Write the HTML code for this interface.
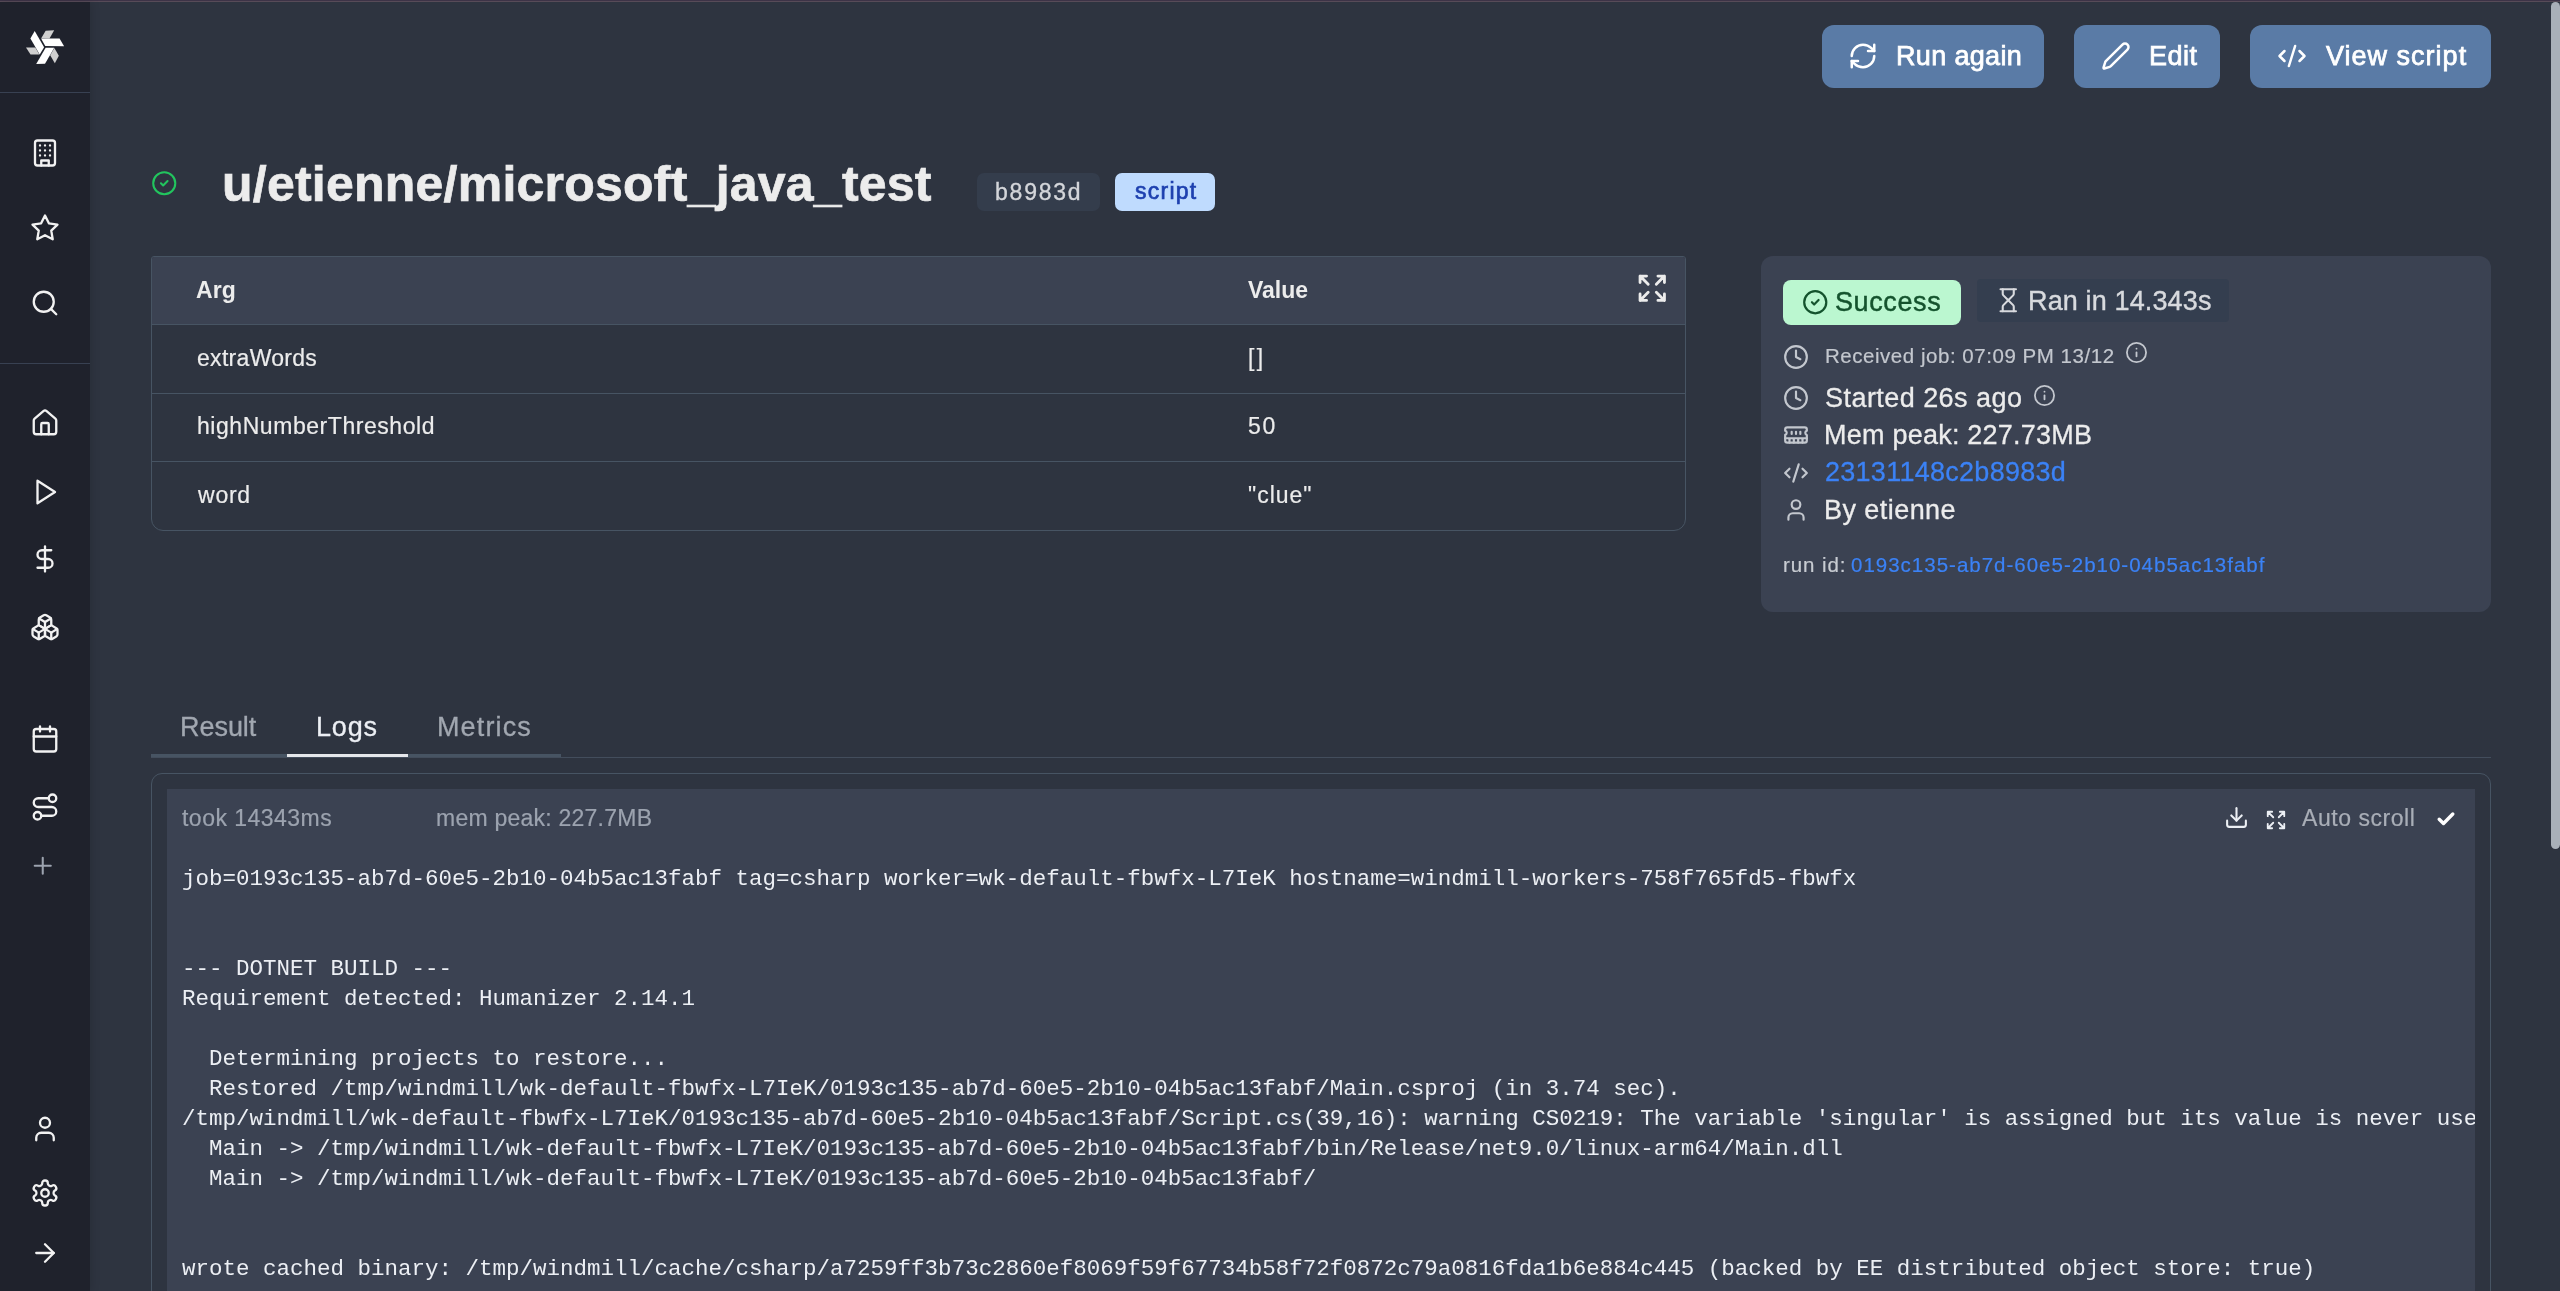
<!DOCTYPE html>
<html><head><meta charset="utf-8">
<style>
*{box-sizing:border-box;margin:0;padding:0}
html,body{width:2560px;height:1291px;overflow:hidden;background:#2e3440;font-family:"Liberation Sans",sans-serif;color:#eceff4}
.abs{position:absolute}
svg{overflow:visible}
.t{position:absolute;white-space:pre;line-height:1;will-change:transform}
#log{position:absolute;left:15px;top:75px;will-change:transform;font-family:"Liberation Mono",monospace;font-size:22.5px;line-height:30px;color:#eceff4;white-space:pre}
</style></head>
<body>
<div class="abs" style="left:0;top:0;width:2560px;height:1px;background:#3d3347"></div>
<div class="abs" style="left:0;top:1px;width:2560px;height:1px;background:#574b58"></div>
<div class="abs" style="left:0;top:2px;width:90px;height:1289px;background:#1f222c;box-shadow:2px 0 8px rgba(0,0,0,.12)"></div>
<div class="abs" style="left:0;top:92px;width:90px;height:1px;background:#384152"></div>
<div class="abs" style="left:0;top:363px;width:90px;height:1px;background:#384152"></div>
<svg class="abs" style="left:45px;top:47px;width:1px;height:1px" viewBox="0 0 1 1"><g><polygon fill="#cfcfcf" points="-19,0.4 -9.7,0.4 -5.6,7.6 -14.5,7.6"/><polygon fill="#ffffff" points="-10.3,-16.1 -0.9,0.2 -5.3,7.6 -14.6,-8.4"/></g><g transform="rotate(120)"><polygon fill="#cfcfcf" points="-19,0.4 -9.7,0.4 -5.6,7.6 -14.5,7.6"/><polygon fill="#ffffff" points="-10.3,-16.1 -0.9,0.2 -5.3,7.6 -14.6,-8.4"/></g><g transform="rotate(240)"><polygon fill="#cfcfcf" points="-19,0.4 -9.7,0.4 -5.6,7.6 -14.5,7.6"/><polygon fill="#ffffff" points="-10.3,-16.1 -0.9,0.2 -5.3,7.6 -14.6,-8.4"/></g></svg>
<svg class="abs" style="left:30.00px;top:137.50px;width:30px;height:30px" viewBox="0 0 24 24" fill="none" stroke="#f2f2f2" stroke-width="1.85" stroke-linecap="round" stroke-linejoin="round"><rect width="16" height="20" x="4" y="2" rx="2" ry="2"/><path d="M9 22v-4h6v4"/><path d="M8 6h.01"/><path d="M16 6h.01"/><path d="M12 6h.01"/><path d="M12 10h.01"/><path d="M12 14h.01"/><path d="M16 10h.01"/><path d="M16 14h.01"/><path d="M8 10h.01"/><path d="M8 14h.01"/></svg>
<svg class="abs" style="left:30.00px;top:212.50px;width:30px;height:30px" viewBox="0 0 24 24" fill="none" stroke="#f2f2f2" stroke-width="1.85" stroke-linecap="round" stroke-linejoin="round"><polygon points="12 2 15.09 8.26 22 9.27 17 14.14 18.18 21.02 12 17.77 5.82 21.02 7 14.14 2 9.27 8.91 8.26 12 2"/></svg>
<svg class="abs" style="left:30.00px;top:287.50px;width:30px;height:30px" viewBox="0 0 24 24" fill="none" stroke="#f2f2f2" stroke-width="1.85" stroke-linecap="round" stroke-linejoin="round"><circle cx="11" cy="11" r="8"/><path d="m21 21-4.3-4.3"/></svg>
<svg class="abs" style="left:30.00px;top:408.00px;width:30px;height:30px" viewBox="0 0 24 24" fill="none" stroke="#f2f2f2" stroke-width="1.85" stroke-linecap="round" stroke-linejoin="round"><path d="M15 21v-8a1 1 0 0 0-1-1h-4a1 1 0 0 0-1 1v8"/><path d="M3 10a2 2 0 0 1 .709-1.528l7-5.999a2 2 0 0 1 2.582 0l7 5.999A2 2 0 0 1 21 10v9a2 2 0 0 1-2 2H5a2 2 0 0 1-2-2z"/></svg>
<svg class="abs" style="left:30.00px;top:476.50px;width:30px;height:30px" viewBox="0 0 24 24" fill="none" stroke="#f2f2f2" stroke-width="1.85" stroke-linecap="round" stroke-linejoin="round"><polygon points="6 3 20 12 6 21 6 3"/></svg>
<svg class="abs" style="left:30.00px;top:544.00px;width:30px;height:30px" viewBox="0 0 24 24" fill="none" stroke="#f2f2f2" stroke-width="1.85" stroke-linecap="round" stroke-linejoin="round"><line x1="12" x2="12" y1="2" y2="22"/><path d="M17 5H9.5a3.5 3.5 0 0 0 0 7h5a3.5 3.5 0 0 1 0 7H6"/></svg>
<svg class="abs" style="left:30.00px;top:612.00px;width:30px;height:30px" viewBox="0 0 24 24" fill="none" stroke="#f2f2f2" stroke-width="1.85" stroke-linecap="round" stroke-linejoin="round"><path d="M2.97 12.92A2 2 0 0 0 2 14.630v3.24a2 2 0 0 0 .97 1.71l3 1.8a2 2 0 0 0 2.06 0L12 19v-5.5l-5-3-4.03 2.42Z"/><path d="m7 16.5-4.74-2.85"/><path d="m7 16.5 5-3"/><path d="M7 16.5v5.17"/><path d="M12 13.5V19l3.970 2.38a2 2 0 0 0 2.06 0l3-1.8a2 2 0 0 0 .97-1.71v-3.24a2 2 0 0 0-.97-1.71L17 10.5l-5 3Z"/><path d="m17 16.5-5-3"/><path d="m17 16.5 4.74-2.85"/><path d="M17 16.5v5.17"/><path d="M7.97 4.42A2 2 0 0 0 7 6.13v4.37l5 3 5-3V6.13a2 2 0 0 0-.97-1.71l-3-1.8a2 2 0 0 0-2.06 0l-3 1.8Z"/><path d="M12 8 7.26 5.15"/><path d="m12 8 4.74-2.85"/><path d="M12 13.5V8"/></svg>
<svg class="abs" style="left:30.00px;top:724.00px;width:30px;height:30px" viewBox="0 0 24 24" fill="none" stroke="#f2f2f2" stroke-width="1.85" stroke-linecap="round" stroke-linejoin="round"><path d="M8 2v4"/><path d="M16 2v4"/><rect width="18" height="18" x="3" y="4" rx="2"/><path d="M3 10h18"/></svg>
<svg class="abs" style="left:30.00px;top:792.00px;width:30px;height:30px" viewBox="0 0 24 24" fill="none" stroke="#f2f2f2" stroke-width="1.85" stroke-linecap="round" stroke-linejoin="round"><circle cx="6" cy="19" r="3"/><path d="M9 19h8.5a3.5 3.5 0 0 0 0-7h-11a3.5 3.5 0 0 1 0-7H15"/><circle cx="18" cy="5" r="3"/></svg>
<svg class="abs" style="left:30.00px;top:1114.00px;width:30px;height:30px" viewBox="0 0 24 24" fill="none" stroke="#f2f2f2" stroke-width="1.85" stroke-linecap="round" stroke-linejoin="round"><path d="M19 21v-2a4 4 0 0 0-4-4H9a4 4 0 0 0-4 4v2"/><circle cx="12" cy="7" r="4"/></svg>
<svg class="abs" style="left:30.00px;top:1178.00px;width:30px;height:30px" viewBox="0 0 24 24" fill="none" stroke="#f2f2f2" stroke-width="1.85" stroke-linecap="round" stroke-linejoin="round"><path d="M12.22 2h-.44a2 2 0 0 0-2 2v.18a2 2 0 0 1-1 1.73l-.43.25a2 2 0 0 1-2 0l-.15-.08a2 2 0 0 0-2.73.73l-.22.38a2 2 0 0 0 .73 2.73l.15.1a2 2 0 0 1 1 1.72v.51a2 2 0 0 1-1 1.74l-.15.09a2 2 0 0 0-.73 2.730l.22.38a2 2 0 0 0 2.73.73l.15-.08a2 2 0 0 1 2 0l.43.25a2 2 0 0 1 1 1.73V20a2 2 0 0 0 2 2h.44a2 2 0 0 0 2-2v-.18a2 2 0 0 1 1-1.73l.43-.25a2 2 0 0 1 2 0l.15.08a2 2 0 0 0 2.73-.73l.22-.39a2 2 0 0 0-.73-2.73l-.15-.08a2 2 0 0 1-1-1.74v-.5a2 2 0 0 1 1-1.74l.15-.09a2 2 0 0 0 .73-2.73l-.22-.38a2 2 0 0 0-2.73-.73l-.15.08a2 2 0 0 1-2 0l-.43-.25a2 2 0 0 1-1-1.73V4a2 2 0 0 0-2-2z"/><circle cx="12" cy="12" r="3"/></svg>
<svg class="abs" style="left:30.00px;top:1238.00px;width:30px;height:30px" viewBox="0 0 24 24" fill="none" stroke="#f2f2f2" stroke-width="1.85" stroke-linecap="round" stroke-linejoin="round"><path d="M5 12h14"/><path d="m12 5 7 7-7 7"/></svg>
<svg class="abs" style="left:29.25px;top:851.55px;width:27.5px;height:27.5px" viewBox="0 0 24 24" fill="none" stroke="#9ca3af" stroke-width="1.8" stroke-linecap="round" stroke-linejoin="round"><path d="M5 12h14"/><path d="M12 5v14"/></svg>
<div class="abs" style="left:2551px;top:2px;width:9px;height:847px;background:#a9b0b9;border-radius:5px"></div>

<div class="abs" style="left:1822px;top:25px;width:222px;height:63px;background:#5a7ba6;border-radius:12px"></div>
<div class="abs" style="left:2074px;top:25px;width:146px;height:63px;background:#5a7ba6;border-radius:12px"></div>
<div class="abs" style="left:2250px;top:25px;width:241px;height:63px;background:#5a7ba6;border-radius:12px"></div>
<svg class="abs" style="left:1848.00px;top:41.00px;width:30px;height:30px" viewBox="0 0 24 24" fill="none" stroke="#fff" stroke-width="2" stroke-linecap="round" stroke-linejoin="round"><path d="M3 12a9 9 0 0 1 9-9 9.75 9.75 0 0 1 6.74 2.74L21 8"/><path d="M21 3v5h-5"/><path d="M21 12a9 9 0 0 1-9 9 9.75 9.75 0 0 1-6.74-2.74L3 16"/><path d="M8 16H3v5"/></svg>
<svg class="abs" style="left:2101.00px;top:41.00px;width:30px;height:30px" viewBox="0 0 24 24" fill="none" stroke="#fff" stroke-width="2" stroke-linecap="round" stroke-linejoin="round"><path d="M21.174 6.812a1 1 0 0 0-3.986-3.987L3.842 16.174a2 2 0 0 0-.5.83l-1.321 4.352a.5.5 0 0 0 .623.622l4.353-1.32a2 2 0 0 0 .83-.497z"/></svg>
<svg class="abs" style="left:2277.00px;top:41.00px;width:30px;height:30px" viewBox="0 0 24 24" fill="none" stroke="#fff" stroke-width="2" stroke-linecap="round" stroke-linejoin="round"><path d="m18 16 4-4-4-4"/><path d="m6 8-4 4 4 4"/><path d="m14.5 4-5 16"/></svg>

<svg class="abs" style="left:150.75px;top:169.75px;width:26.5px;height:26.5px" viewBox="0 0 24 24" fill="none" stroke="#22c55e" stroke-width="1.85" stroke-linecap="round" stroke-linejoin="round"><circle cx="12" cy="12" r="10"/><path d="m9 12 2 2 4-4"/></svg>
<div class="abs" style="left:977px;top:173px;width:123px;height:38px;background:#343d4c;border-radius:7px"></div>
<div class="abs" style="left:1115px;top:173px;width:100px;height:38px;background:#bfdbfe;border-radius:7px"></div>

<div class="abs" style="left:151px;top:256px;width:1535px;height:275px;border:1px solid #475463;border-radius:3px 3px 12px 12px;overflow:hidden">
  <div class="abs" style="left:0;top:0;width:1533px;height:68px;background:#3b4252;border-bottom:1px solid #475463"></div>
  <div class="abs" style="left:0;top:136px;width:1533px;height:1px;background:#475463"></div>
  <div class="abs" style="left:0;top:204px;width:1533px;height:1px;background:#475463"></div>
</div>
<svg class="abs" style="left:1636.25px;top:272.25px;width:32.5px;height:32.5px" viewBox="0 0 24 24" fill="none" stroke="#ececec" stroke-width="2.1" stroke-linecap="round" stroke-linejoin="round"><path d="m21 21-6-6m6 6v-4.8m0 4.8h-4.8"/><path d="M3 16.2V21m0 0h4.8M3 21l6-6"/><path d="M21 7.8V3m0 0h-4.8M21 3l-6 6"/><path d="M3 7.8V3m0 0h4.8M3 3l6 6"/></svg>

<div class="abs" style="left:1761px;top:256px;width:730px;height:356px;background:#3b4252;border-radius:12px"></div>
<div class="abs" style="left:1783px;top:280px;width:178px;height:45px;background:#bbf7d0;border-radius:8px"></div>
<svg class="abs" style="left:1801.75px;top:288.75px;width:26.5px;height:26.5px" viewBox="0 0 24 24" fill="none" stroke="#14532d" stroke-width="2" stroke-linecap="round" stroke-linejoin="round"><circle cx="12" cy="12" r="10"/><path d="m9 12 2 2 4-4"/></svg>
<div class="abs" style="left:1977px;top:279px;width:252px;height:43px;background:#343e4f;border-radius:4px"></div>
<svg class="abs" style="left:1994.75px;top:286.75px;width:26.5px;height:26.5px" viewBox="0 0 24 24" fill="none" stroke="#d8dade" stroke-width="1.9" stroke-linecap="round" stroke-linejoin="round"><path d="M5 22h14"/><path d="M5 2h14"/><path d="M17 22v-4.172a2 2 0 0 0-.586-1.414L12 12l-4.414 4.414A2 2 0 0 0 7 17.828V22"/><path d="M7 2v4.172a2 2 0 0 0 .586 1.414L12 12l4.414-4.414A2 2 0 0 0 17 6.172V2"/></svg>
<svg class="abs" style="left:1783.00px;top:344.00px;width:26px;height:26px" viewBox="0 0 24 24" fill="none" stroke="#c3c7ce" stroke-width="2" stroke-linecap="round" stroke-linejoin="round"><circle cx="12" cy="12" r="10"/><polyline points="12 6 12 12 16 14"/></svg>
<svg class="abs" style="left:2124.50px;top:340.50px;width:23px;height:23px" viewBox="0 0 24 24" fill="none" stroke="#c3c7ce" stroke-width="1.9" stroke-linecap="round" stroke-linejoin="round"><circle cx="12" cy="12" r="10"/><path d="M12 16v-4"/><path d="M12 8h.01"/></svg>
<svg class="abs" style="left:1783.00px;top:385.00px;width:26px;height:26px" viewBox="0 0 24 24" fill="none" stroke="#c3c7ce" stroke-width="2" stroke-linecap="round" stroke-linejoin="round"><circle cx="12" cy="12" r="10"/><polyline points="12 6 12 12 16 14"/></svg>
<svg class="abs" style="left:2032.50px;top:383.80px;width:23px;height:23px" viewBox="0 0 24 24" fill="none" stroke="#c3c7ce" stroke-width="1.9" stroke-linecap="round" stroke-linejoin="round"><circle cx="12" cy="12" r="10"/><path d="M12 16v-4"/><path d="M12 8h.01"/></svg>
<svg class="abs" style="left:1783.00px;top:422.00px;width:26px;height:26px" viewBox="0 0 24 24" fill="none" stroke="#c3c7ce" stroke-width="2" stroke-linecap="round" stroke-linejoin="round"><path d="M6 19v-3"/><path d="M10 19v-3"/><path d="M14 19v-3"/><path d="M18 19v-3"/><path d="M8 11V9"/><path d="M16 11V9"/><path d="M12 11V9"/><path d="M2 15h20"/><path d="M2 7a2 2 0 0 1 2-2h16a2 2 0 0 1 2 2v1.1a2 2 0 0 0 0 3.837V17a2 2 0 0 1-2 2H4a2 2 0 0 1-2-2v-5.1a2 2 0 0 0 0-3.837Z"/></svg>
<svg class="abs" style="left:1783.00px;top:460.00px;width:26px;height:26px" viewBox="0 0 24 24" fill="none" stroke="#c3c7ce" stroke-width="2" stroke-linecap="round" stroke-linejoin="round"><path d="m18 16 4-4-4-4"/><path d="m6 8-4 4 4 4"/><path d="m14.5 4-5 16"/></svg>
<svg class="abs" style="left:1783.00px;top:497.00px;width:26px;height:26px" viewBox="0 0 24 24" fill="none" stroke="#c3c7ce" stroke-width="2" stroke-linecap="round" stroke-linejoin="round"><path d="M19 21v-2a4 4 0 0 0-4-4H9a4 4 0 0 0-4 4v2"/><circle cx="12" cy="7" r="4"/></svg>

<div class="abs" style="left:151px;top:757px;width:2340px;height:1px;background:#434d5c"></div>
<div class="abs" style="left:151px;top:754px;width:410px;height:3px;background:#475463"></div>
<div class="abs" style="left:287px;top:754px;width:121px;height:3px;background:#e5e7eb"></div>

<div class="abs" style="left:151px;top:773px;width:2340px;height:600px;border:1px solid #475463;border-radius:11px"></div>
<div class="abs" style="left:167px;top:789px;width:2308px;height:600px;background:#3b4252;overflow:hidden">
  <pre id="log">job=0193c135-ab7d-60e5-2b10-04b5ac13fabf tag=csharp worker=wk-default-fbwfx-L7IeK hostname=windmill-workers-758f765fd5-fbwfx


--- DOTNET BUILD ---
Requirement detected: Humanizer 2.14.1

  Determining projects to restore...
  Restored /tmp/windmill/wk-default-fbwfx-L7IeK/0193c135-ab7d-60e5-2b10-04b5ac13fabf/Main.csproj (in 3.74 sec).
/tmp/windmill/wk-default-fbwfx-L7IeK/0193c135-ab7d-60e5-2b10-04b5ac13fabf/Script.cs(39,16): warning CS0219: The variable 'singular' is assigned but its value is never used [/tmp/windmill/wk-default-fbwfx-L7IeK/0193c135-ab7d-60e5-2b10-04b5ac13fabf/Main.csproj]
  Main -&gt; /tmp/windmill/wk-default-fbwfx-L7IeK/0193c135-ab7d-60e5-2b10-04b5ac13fabf/bin/Release/net9.0/linux-arm64/Main.dll
  Main -&gt; /tmp/windmill/wk-default-fbwfx-L7IeK/0193c135-ab7d-60e5-2b10-04b5ac13fabf/


wrote cached binary: /tmp/windmill/cache/csharp/a7259ff3b73c2860ef8069f59f67734b58f72f0872c79a0816fda1b6e884c445 (backed by EE distributed object store: true)</pre>
</div>
<svg class="abs" style="left:2223.50px;top:804.50px;width:25px;height:25px" viewBox="0 0 24 24" fill="none" stroke="#eceff4" stroke-width="2" stroke-linecap="round" stroke-linejoin="round"><path d="M21 15v4a2 2 0 0 1-2 2H5a2 2 0 0 1-2-2v-4"/><polyline points="7 10 12 15 17 10"/><line x1="12" x2="12" y1="15" y2="3"/></svg>
<svg class="abs" style="left:2264.50px;top:808.50px;width:22px;height:22px" viewBox="0 0 24 24" fill="none" stroke="#eceff4" stroke-width="2" stroke-linecap="round" stroke-linejoin="round"><path d="m21 21-6-6m6 6v-4.8m0 4.8h-4.8"/><path d="M3 16.2V21m0 0h4.8M3 21l6-6"/><path d="M21 7.8V3m0 0h-4.8M21 3l-6 6"/><path d="M3 7.8V3m0 0h4.8M3 3l6 6"/></svg>
<svg class="abs" style="left:2437px;top:811px;width:18px;height:15px" viewBox="0 0 18 15" fill="none" stroke="#fff" stroke-width="3.4" stroke-linecap="round" stroke-linejoin="round"><path d="M2.2 8.2l4.3 4.3L15.8 3"/></svg>

<div class="t" style="left:221.50px;top:159.30px;font-size:50px;font-weight:700;letter-spacing:0.232px;color:#ececec;-webkit-text-stroke:0.7px #ececec">u/etienne/microsoft_java_test</div>
<div class="t" style="left:1895.70px;top:43.30px;font-size:27px;font-weight:400;letter-spacing:0.338px;color:#ffffff;-webkit-text-stroke:0.75px #ffffff">Run again</div>
<div class="t" style="left:2148.60px;top:43.40px;font-size:27px;font-weight:400;letter-spacing:0.533px;color:#ffffff;-webkit-text-stroke:0.75px #ffffff">Edit</div>
<div class="t" style="left:2326.20px;top:43.40px;font-size:27px;font-weight:400;letter-spacing:1.010px;color:#ffffff;-webkit-text-stroke:0.75px #ffffff">View script</div>
<div class="t" style="left:995.40px;top:180.60px;font-size:23px;font-weight:400;letter-spacing:1.780px;color:#d4d6da;-webkit-text-stroke:0.35px #d4d6da">b8983d</div>
<div class="t" style="left:1134.60px;top:180.20px;font-size:23px;font-weight:400;letter-spacing:1.240px;color:#1e40af;-webkit-text-stroke:0.65px #1e40af">script</div>
<div class="t" style="left:196.30px;top:278.50px;font-size:23px;font-weight:700;letter-spacing:0.150px;color:#ececec">Arg</div>
<div class="t" style="left:1247.80px;top:278.50px;font-size:23px;font-weight:700;letter-spacing:0.000px;color:#ececec">Value</div>
<div class="t" style="left:196.70px;top:346.70px;font-size:23px;font-weight:400;letter-spacing:0.300px;color:#ececec;-webkit-text-stroke:0.2px #ececec">extraWords</div>
<div class="t" style="left:1247.50px;top:346.70px;font-size:23px;font-weight:400;letter-spacing:2.300px;color:#ececec;-webkit-text-stroke:0.2px #ececec">[]</div>
<div class="t" style="left:196.70px;top:415.00px;font-size:23px;font-weight:400;letter-spacing:0.550px;color:#ececec;-webkit-text-stroke:0.2px #ececec">highNumberThreshold</div>
<div class="t" style="left:1247.50px;top:415.00px;font-size:23px;font-weight:400;letter-spacing:1.600px;color:#ececec;-webkit-text-stroke:0.2px #ececec">50</div>
<div class="t" style="left:197.70px;top:483.50px;font-size:23px;font-weight:400;letter-spacing:0.767px;color:#ececec;-webkit-text-stroke:0.2px #ececec">word</div>
<div class="t" style="left:1247.50px;top:483.50px;font-size:23px;font-weight:400;letter-spacing:1.000px;color:#ececec;-webkit-text-stroke:0.2px #ececec">"clue"</div>
<div class="t" style="left:1835.40px;top:289.00px;font-size:27px;font-weight:400;letter-spacing:0.600px;color:#14532d;-webkit-text-stroke:0.45px #14532d">Success</div>
<div class="t" style="left:2027.70px;top:287.60px;font-size:27px;font-weight:400;letter-spacing:0.138px;color:#d8dade;-webkit-text-stroke:0.4px #d8dade">Ran in 14.343s</div>
<div class="t" style="left:1824.60px;top:345.90px;font-size:20.5px;font-weight:400;letter-spacing:0.533px;color:#c3c7ce;-webkit-text-stroke:0.2px #c3c7ce">Received job: 07:09 PM 13/12</div>
<div class="t" style="left:1824.70px;top:384.60px;font-size:27px;font-weight:400;letter-spacing:0.450px;color:#ececec;-webkit-text-stroke:0.3px #ececec">Started 26s ago</div>
<div class="t" style="left:1823.70px;top:422.00px;font-size:27px;font-weight:400;letter-spacing:0.229px;color:#ececec;-webkit-text-stroke:0.3px #ececec">Mem peak: 227.73MB</div>
<div class="t" style="left:1824.70px;top:458.80px;font-size:27px;font-weight:400;letter-spacing:0.273px;color:#3b82f6;-webkit-text-stroke:0.3px #3b82f6">23131148c2b8983d</div>
<div class="t" style="left:1823.70px;top:497.00px;font-size:27px;font-weight:400;letter-spacing:0.444px;color:#ececec;-webkit-text-stroke:0.3px #ececec">By etienne</div>
<div class="t" style="left:1782.80px;top:555.20px;font-size:20.5px;font-weight:400;letter-spacing:0.917px;color:#c8ccd2;-webkit-text-stroke:0.2px #c8ccd2">run id:</div>
<div class="t" style="left:1851.00px;top:555.20px;font-size:20.5px;font-weight:400;letter-spacing:1.000px;color:#3b82f6;-webkit-text-stroke:0.2px #3b82f6">0193c135-ab7d-60e5-2b10-04b5ac13fabf</div>
<div class="t" style="left:179.60px;top:714.40px;font-size:27px;font-weight:400;letter-spacing:-0.040px;color:#a1a7b0;-webkit-text-stroke:0.3px #a1a7b0">Result</div>
<div class="t" style="left:316.30px;top:714.40px;font-size:27px;font-weight:400;letter-spacing:0.800px;color:#eceff4;-webkit-text-stroke:0.3px #eceff4">Logs</div>
<div class="t" style="left:436.60px;top:714.40px;font-size:27px;font-weight:400;letter-spacing:1.133px;color:#a1a7b0;-webkit-text-stroke:0.3px #a1a7b0">Metrics</div>
<div class="t" style="left:181.60px;top:806.50px;font-size:23px;font-weight:400;letter-spacing:0.473px;color:#9ca3af;-webkit-text-stroke:0.2px #9ca3af">took 14343ms</div>
<div class="t" style="left:436.00px;top:806.50px;font-size:23px;font-weight:400;letter-spacing:0.237px;color:#9ca3af;-webkit-text-stroke:0.2px #9ca3af">mem peak: 227.7MB</div>
<div class="t" style="left:2302.00px;top:807.00px;font-size:23px;font-weight:400;letter-spacing:0.540px;color:#a9aeb7;-webkit-text-stroke:0.2px #a9aeb7">Auto scroll</div>
</body></html>
